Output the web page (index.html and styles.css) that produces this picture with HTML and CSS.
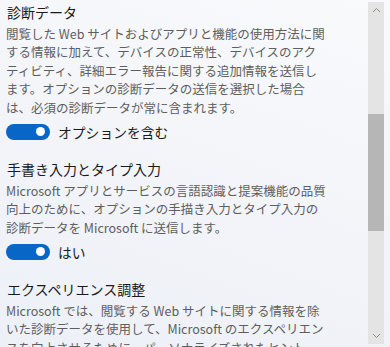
FILE: index.html
```html
<!DOCTYPE html>
<html lang="ja">
<head>
<meta charset="utf-8">
<link rel="stylesheet" href="styles.css">
</head>
<body>
<div class="page">
  <main class="content">
    <section class="group first">
      <h2 class="title">診断データ</h2>
      <p class="desc">閲覧した Web サイトおよびアプリと機能の使用方法に関<br>する情報に加えて、デバイスの正常性、デバイスのアク<br>ティビティ、詳細エラー報告に関する追加情報を送信し<br>ます。オプションの診断データの送信を選択した場合<br>は、必須の診断データが常に含まれます。</p>
      <div class="toggle-row">
        <span class="toggle"><span class="knob"></span></span>
        <span class="toggle-label">オプションを含む</span>
      </div>
    </section>
    <section class="group">
      <h2 class="title">手書き入力とタイプ入力</h2>
      <p class="desc">Microsoft アプリとサービスの言語認識と提案機能の品質<br>向上のために、オプションの手描き入力とタイプ入力の<br>診断データを Microsoft に送信します。</p>
      <div class="toggle-row">
        <span class="toggle"><span class="knob"></span></span>
        <span class="toggle-label">はい</span>
      </div>
    </section>
    <section class="group">
      <h2 class="title">エクスペリエンス調整</h2>
      <p class="desc">Microsoft では、閲覧する Web サイトに関する情報を除<br>いた診断データを使用して、Microsoft のエクスペリエン<br>スを向上させるために、パーソナライズされたヒント、</p>
    </section>
  </main>
  <div class="scrollbar">
    <svg class="arrow" width="9" height="6" viewBox="0 0 9 6"><path d="M1 5 L4.5 1.5 L8 5" fill="none" stroke="#8c8c8c" stroke-width="1"/></svg>
    <div class="track">
      <div class="thumb"></div>
    </div>
    <svg class="arrow" width="9" height="6" viewBox="0 0 9 6"><path d="M1 1 L4.5 4.5 L8 1" fill="none" stroke="#8c8c8c" stroke-width="1"/></svg>
  </div>
</div>
</body>
</html>
```

FILE: styles.css
```css
* { box-sizing: border-box; }
html, body {
  margin: 0;
  padding: 0;
  width: 390px;
  height: 347px;
  overflow: hidden;
}
body {
  background: linear-gradient(200deg, #f9fafc 0%, #f3f5f9 45%, #edf0f7 100%);
  font-family: "Noto Sans CJK JP", "Noto Sans", sans-serif;
  color: #1b1b1b;
}
.page {
  display: flex;
  height: 347px;
}
.content {
  flex: 1;
  padding: 2px 0 0 6px;
  overflow: hidden;
}
.group { margin-top: 17.5px; }
.group.first { margin-top: 0; }
.title {
  margin: 0;
  padding-left: 1px;
  font-size: 14px;
  line-height: 20px;
  font-weight: 400;
  color: #1a1a1a;
  white-space: nowrap;
}
.desc {
  margin: 2.5px 0 0;
  font-size: 12.5px;
  line-height: 18.5px;
  color: #5e5e5e;
  white-space: nowrap;
}
.toggle-row {
  margin-top: 4.5px;
  display: flex;
  align-items: center;
  gap: 8px;
  height: 20px;
}
.toggle {
  width: 44px;
  height: 16px;
  border-radius: 8px;
  background: #0867c6;
  display: flex;
  align-items: center;
  justify-content: flex-end;
  padding-right: 5px;
}
.knob {
  width: 9px;
  height: 9px;
  border-radius: 50%;
  background: #ffffff;
}
.toggle-label {
  font-size: 13.8px;
  line-height: 20px;
  color: #1b1b1b;
}
.scrollbar {
  width: 16px;
  margin: 2px 6px 3px 0;
  background: #e4e4e4;
  display: flex;
  flex-direction: column;
  align-items: center;
}
.arrow {
  flex: none;
  margin: 5px 0;
}
.track {
  flex: 1;
  width: 100%;
  padding-top: 96px;
}
.thumb {
  height: 117px;
  background: #b6b6b6;
}
```
